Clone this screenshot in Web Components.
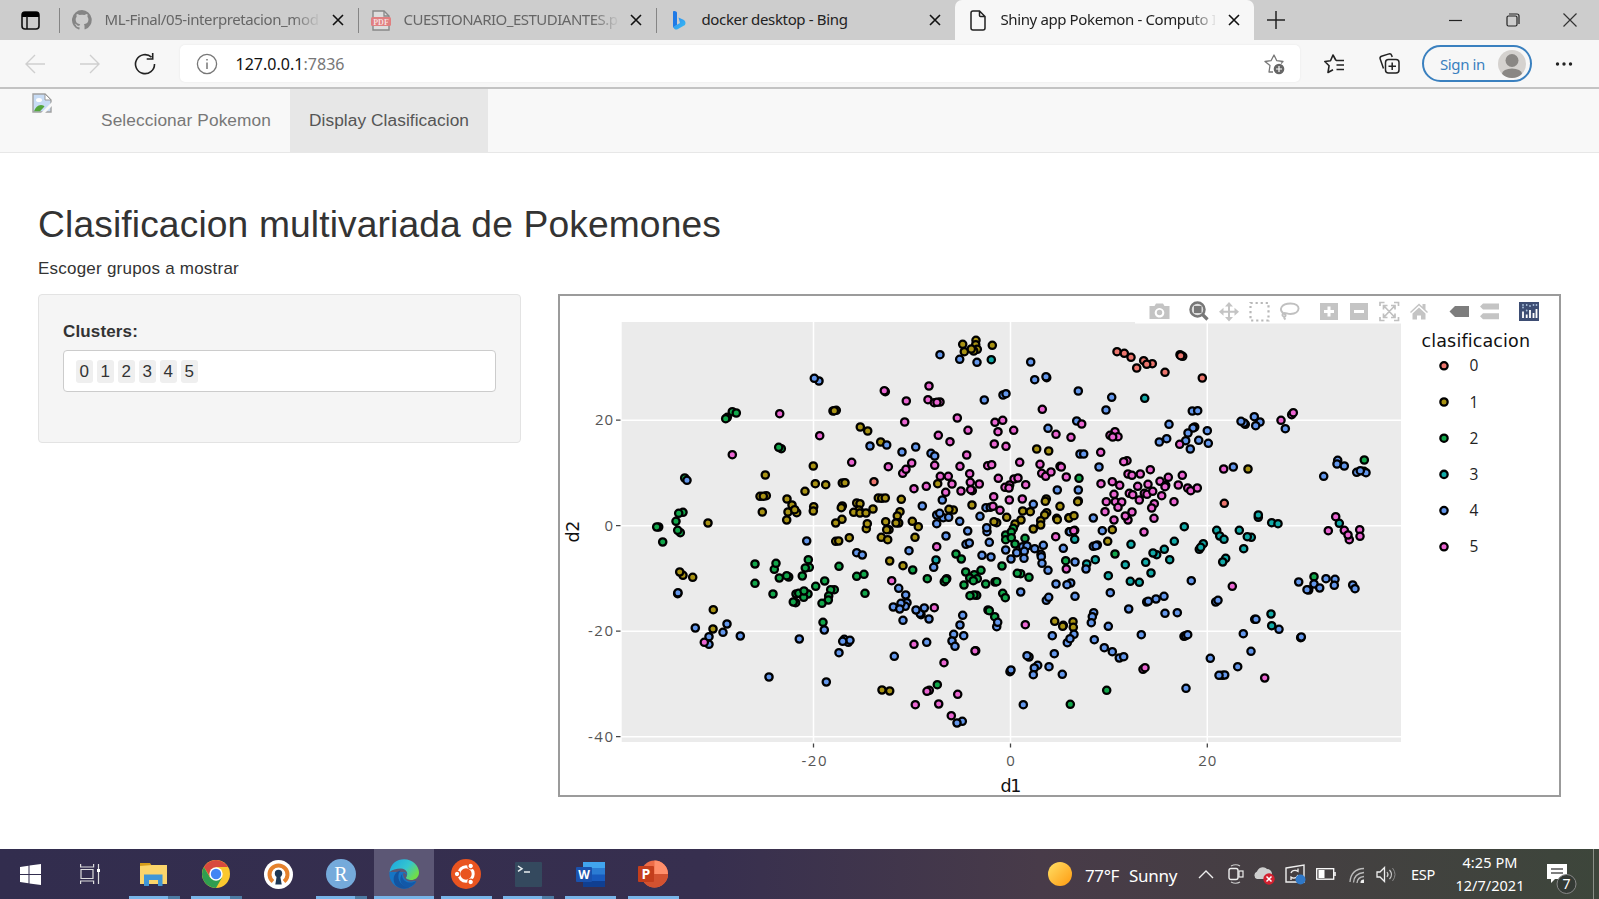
<!DOCTYPE html>
<html lang="es">
<head>
<meta charset="utf-8">
<title>Shiny app Pokemon - Computo</title>
<style>
html,body{margin:0;height:100%;overflow:hidden;background:#fff}
body{font-family:"Liberation Sans",Arial,sans-serif;color:#333}
</style>
</head>
<body>
<desktop-screen></desktop-screen>
<script>
const define = (name, html, after) => {
  const t = document.createElement('template');
  t.innerHTML = html;
  customElements.define(name, class extends HTMLElement {
    connectedCallback() {
      if (this.shadowRoot) return;
      this.attachShadow({mode: 'open'}).append(t.content.cloneNode(true));
      if (after) after(this, this.shadowRoot);
    }
  });
};

/* One line of text spaced to a given advance width */
define('fit-text', `<style>
:host{display:block;white-space:nowrap;flex:none}
span{display:inline-block}
</style><span><slot></slot></span>`, (host, root) => {
  const w = +host.getAttribute('w'), s = root.querySelector('span');
  host.style.width = w + 'px';
  const n = host.textContent.length;
  s.style.letterSpacing = ((w - s.getBoundingClientRect().width) / n) + 'px';
});

define('browser-tab', `<style>
:host{display:flex;align-items:center;height:40px;box-sizing:border-box;flex:none;color:#666;position:relative;padding-left:12px}
:host([sep])::before{content:"";position:absolute;left:0;top:8px;height:25px;width:1px;background:#858585}
:host([active]){background:#f7f7f7;border-radius:7px 7px 0 0;color:#222;padding-left:12px}
:host([dark]){color:#222}
.i{width:22px;height:22px;flex:none;margin-right:11.500px;display:flex;align-items:center;justify-content:center}
.t{flex:none;width:214px;padding-bottom:2px}
:host([fade]) .t{-webkit-mask-image:linear-gradient(90deg,#000 88%,transparent 101%);mask-image:linear-gradient(90deg,#000 88%,transparent 101%)}
.x{margin-left:auto;margin-right:14px;flex:none;display:block}
</style><div class="i"><slot name="icon"></slot></div><div class="t"><slot></slot></div>
<svg class="x" width="12" height="12" viewBox="0 0 12 12"><path d="M1 1l10 10M11 1L1 11" stroke="#111" stroke-width="1.600"/></svg>`);

define('tab-strip', `<style>
:host{display:flex;height:40px;background:#cdcdcd;font:15px "Noto Sans","Open Sans",sans-serif}
svg{display:block;flex:none}
.a{width:59px;display:flex;align-items:center;padding-left:20.500px;box-sizing:border-box}
.p{width:44px;display:flex;align-items:center;justify-content:center}
.w{margin-left:auto;display:flex;align-items:center;padding-right:22px}
</style>
<div class="a"><svg width="19" height="19" viewBox="0 0 19 19"><rect x="1" y="1" width="17" height="17" rx="3" fill="none" stroke="#111" stroke-width="1.600"/><path d="M1 3q0-2 2-2h13q2 0 2 2v3H1z" fill="#000"/><path d="M6 5v13" stroke="#111" stroke-width="1.500"/></svg></div>
<browser-tab sep fade style="width:299px"><svg slot="icon" width="20" height="20" viewBox="0 0 16 16"><path fill="#858585" d="M8 0a8 8 0 0 0-2.53 15.59c.4.07.55-.17.55-.38v-1.5C3.8 14.200 3.330 12.650 3.330 12.650c-.36-.92-.89-1.170-.89-1.170-.72-.5.060-.49.060-.49.8.06 1.230.83 1.230.83.71 1.220 1.870.87 2.330.66.070-.52.28-.87.51-1.070-1.780-.2-3.640-.89-3.640-3.950 0-.87.31-1.590.82-2.150-.08-.2-.36-1.020.08-2.120 0 0 .67-.21 2.200.82a7.600 7.600 0 0 1 4 0c1.530-1.040 2.200-.82 2.200-.82.44 1.100.16 1.920.08 2.120.51.56.82 1.270.82 2.150 0 3.070-1.870 3.750-3.650 3.950.29.25.54.73.54 1.480v2.220c0 .21.15.46.55.38A8 8 0 0 0 8 0z"/></svg><fit-text w="214">ML-Final/05-interpretacion_mod</fit-text></browser-tab>
<browser-tab sep fade style="width:298px"><svg slot="icon" width="20" height="21" viewBox="0 0 20 21"><path d="M2 1h11l5 5v14H2z" fill="#ddd" stroke="#888" stroke-width="1.400"/><path d="M13 1v5h5" fill="none" stroke="#888" stroke-width="1.300"/><rect x="0" y="7" width="20" height="9" rx="1.500" fill="#e07f80"/><text x="10" y="14.500" font-size="8" font-weight="bold" fill="#f6dede" text-anchor="middle" font-family="Liberation Serif,serif">PDF</text></svg><fit-text w="214">CUESTIONARIO_ESTUDIANTES.p</fit-text></browser-tab>
<browser-tab sep dark style="width:299px"><svg slot="icon" width="16" height="20" viewBox="0 0 16 20"><defs><linearGradient id="b" x2="1" y2="1"><stop offset="0" stop-color="#2d8cf0"/><stop offset="1" stop-color="#38bdf2"/></linearGradient></defs><path d="M2 2q0-1.500 1.500-1L5 1.600q1 .4 1 1.400v12L2 17.500z" fill="#1f7ae6"/><path d="M7.500 7.500l5 2.300q3 2 1.500 5.200L7 19q-2 1-3.500 0L2 17l7-4z" fill="url(#b)"/></svg><fit-text w="146">docker desktop - Bing</fit-text></browser-tab>
<browser-tab active fade style="width:299px"><svg slot="icon" width="16" height="21" viewBox="0 0 16 21"><path d="M1 3q0-2 2-2h6.500L15 6.500V18q0 2-2 2H3q-2 0-2-2zM9.500 1v4.500q0 1 1 1H15" fill="none" stroke="#222" stroke-width="1.500"/></svg><fit-text w="216">Shiny app Pokemon - Computo I</fit-text></browser-tab>
<div class="p"><svg width="18" height="18" viewBox="0 0 18 18"><path d="M9 0v18M0 9h18" stroke="#222" stroke-width="1.500"/></svg></div>
<div class="w"><svg style="margin-right:44px" width="13" height="13" viewBox="0 0 13 13"><path d="M0 6.500h13" stroke="#222" stroke-width="1.200"/></svg>
<svg style="margin-right:43px" width="14" height="14" viewBox="0 0 14 14"><rect x="1" y="3" width="10" height="10" rx="1.500" fill="none" stroke="#222" stroke-width="1.200"/><path d="M3 1h8q2 0 2 2v8" fill="none" stroke="#222" stroke-width="1.200"/></svg>
<svg width="14" height="14" viewBox="0 0 14 14"><path d="M.5.5l13 13M13.500.5l-13 13" stroke="#333" stroke-width="1.200"/></svg></div>`);

define('tool-bar', `<style>
:host{display:flex;height:49px;box-sizing:border-box;background:#f7f7f7;border-bottom:2px solid #c3c3c3;align-items:center;font:16px "Noto Sans","Open Sans",sans-serif}
svg{display:block;flex:none}
.addr{display:flex;align-items:center;width:1120px;height:37px;background:#fff;border-radius:5px;margin-left:24px;box-sizing:border-box;padding:0 15px 0 16px;box-shadow:0 0 2px #e4e4e4;flex:none;color:#777}
b{font-weight:normal;color:#111}
.addr fit-text{margin-left:17.500px}
.addr svg:last-child{margin-left:auto}
.pill{display:flex;align-items:center;width:110px;height:37px;box-sizing:border-box;border:2px solid #3a80bf;border-radius:19px;margin-left:22px;padding:0 4px 0 16.500px;color:#3a80bf;font-size:15px;justify-content:space-between}
</style>
<svg style="margin-left:25px" width="20" height="20" viewBox="0 0 20 20"><path d="M20 10H1M10 1L1 10l9 9" fill="none" stroke="#cfcfcf" stroke-width="1.400"/></svg>
<svg style="margin-left:35px" width="20" height="20" viewBox="0 0 20 20"><path d="M0 10h19M10 1l9 9-9 9" fill="none" stroke="#cfcfcf" stroke-width="1.400"/></svg>
<svg style="margin-left:34px" width="22" height="22" viewBox="0 0 22 22"><path d="M20.500 11A9.500 9.500 0 1 1 17.500 4.200M18.700 0v6h-6" fill="none" stroke="#222" stroke-width="1.600"/></svg>
<div class="addr"><svg width="22" height="22" viewBox="0 0 22 22"><circle cx="11" cy="11" r="9.600" fill="none" stroke="#777" stroke-width="1.300"/><path d="M11 9.500v6.500M11 6v1.600" stroke="#777" stroke-width="1.500"/></svg><fit-text w="109"><b>127.0.0.1</b>:7836</fit-text>
<svg width="21" height="22" viewBox="0 0 21 22"><path d="M9 19H5l1-6.500L1 8.500l6-.8L10 2l2.800 5.700 6.200.8-2 2" fill="none" stroke="#777" stroke-width="1.300" stroke-linejoin="round"/><circle cx="15" cy="16" r="5.300" fill="#666"/><path d="M15 13v6M12 16h6" stroke="#fff" stroke-width="1.200"/></svg></div>
<svg style="margin-left:24px" width="21" height="20" viewBox="0 0 21 20"><path d="M12 6.500L9 1 6.500 6.800.8 7.500l4.300 4.200L4 18.500l5-2.800M12 6.500h8M12.500 11H20M12.500 15.500H20" fill="none" stroke="#222" stroke-width="1.600" stroke-linejoin="round"/></svg>
<svg style="margin-left:33.500px" width="21" height="21" viewBox="0 0 21 21"><rect x="6.500" y="6.500" width="13.500" height="13.500" rx="3" fill="none" stroke="#222" stroke-width="1.500"/><path d="M4.500 15.500L1.200 6q-.7-2 1.300-2.700L10 .9q2-.4 2.700 1.600l.5 1.400M13.200 9.500v7.500M9.500 13.200H17" fill="none" stroke="#222" stroke-width="1.500"/></svg>
<div class="pill"><fit-text w="45">Sign in</fit-text><svg width="28" height="28" viewBox="0 0 28 28"><defs><clipPath id="c"><circle cx="14" cy="14" r="14"/></clipPath></defs><circle cx="14" cy="14" r="14" fill="#d5d2cf"/><g clip-path="url(#c)" fill="#8a8784"><circle cx="14" cy="10.500" r="6.500"/><ellipse cx="14" cy="24" rx="10" ry="5.500"/></g></svg></div>
<svg style="margin-left:23px" width="18" height="4" viewBox="0 0 18 4"><g fill="#222"><circle cx="2.500" cy="2" r="1.700"/><circle cx="9" cy="2" r="1.700"/><circle cx="15.500" cy="2" r="1.700"/></g></svg>`);

define('nav-link', `<style>:host{display:flex;align-items:center;height:63px;padding:0 19px;color:#777;font-size:17.300px;line-height:21px}:host([active]){background:#e7e7e7;color:#555}</style><slot></slot>`);

define('nav-bar', `<style>
:host{display:flex;height:64px;box-sizing:border-box;background:#f8f8f8;border-bottom:1px solid #e7e7e7}
svg{margin:4px 30px 0 32px;width:20px;height:20px;display:block}
</style>
<svg viewBox="0 0 20 20"><path d="M1 1h12l6 6v12H1z" fill="#c8dcf5" stroke="#a0a0a0" stroke-width="1.400"/><path d="M13 1v6h6z" fill="#fff" stroke="#999"/><ellipse cx="7" cy="7" rx="3" ry="2" fill="#fff"/><path d="M2 18.300q2-6 7-6.300 3 0 3.500 1.500L8 18.300z" fill="#54a63c"/><path d="M20 9L9 20h4l7-7z" fill="#f8f8f8"/></svg>
<nav-link><fit-text w="170">Seleccionar Pokemon</fit-text></nav-link>
<nav-link active><fit-text w="160">Display Clasificacion</fit-text></nav-link>`);

define('cluster-chip', `<style>:host{display:block;width:17.500px;height:23px;line-height:24px;text-align:center;background:#efefef;border-radius:3px;font-size:17px;color:#333}</style><slot></slot>`);

define('cluster-panel', `<style>
:host{display:block;box-sizing:border-box;width:483px;height:149px;background:#f5f5f5;border:1px solid #e3e3e3;border-radius:4px;padding:25px 24px}
label{display:block;font-weight:bold;font-size:17px;line-height:24px;margin-bottom:6px}
.in{display:flex;align-items:center;gap:3.500px;height:42px;box-sizing:border-box;background:#fff;border:1px solid #ccc;border-radius:4px;padding-left:11.500px}
</style><label><fit-text w="75">Clusters:</fit-text></label><div class="in"></div>`, (h, r) => {
  for (let i = 0; i < 6; i++) { const c = document.createElement('cluster-chip'); c.textContent = i; r.querySelector('.in').append(c); }
});

/* Point lists: tiles with an origin, coordinates in thirds of a pixel, grouped by class */
const tiles = [
 {o:[550,320],
  1:'646,465 630,529 649,527 640,529 637,576 711,537 726,555 714,576 740,578 734,569 710,600 474,609',
  2:'547,275 532,292 527,296 559,279 694,386 686,382 404,474 399,577 386,580 378,604 326,621 320,621 391,638 383,631 338,666',
  4:'411,481', 5:'689,281 547,404'},
 {o:[800,320],
  0:'222,485',
  1:'528,61 488,73 527,74 577,76 493,95 532,88 521,93 514,87 99,273 109,271 103,272 181,321 203,333 242,366 710,387 746,393 40,438 46,491 77,494 15,514 127,489 135,488 413,491 235,534 245,535 256,534 304,538 170,549 180,551 127,558 124,563 177,570 161,577 180,579 198,579 219,567 126,598 107,609 300,575 292,588 257,605 296,609 288,609 337,604 355,620 199,626 202,611 267,629 260,629 244,652 263,659 345,652 107,664 116,663 148,653 41,560 40,573 460,570 447,568 516,555 590,608 582,605 620,592 663,600 645,612 668,573 691,575 739,537 736,544 780,559 740,578 734,585 722,602 722,615 700,627 770,595 772,599 807,593',
  2:'640,625 617,645 634,636 617,659 634,653 645,672 675,655',
  3:'574,119',
  4:'57,183 43,175 420,104 479,118 531,127 692,126 704,179 740,173 738,170 553,240 609,225 618,221 744,325 210,378 260,375 306,396 347,381 393,400 404,408 772,510 367,558 427,540 410,585 430,593 419,580 446,592 410,611 479,604 540,589 558,563 571,562 503,633 561,635 560,623 438,648 568,667 498,673 508,669 700,553 730,676 20,663 668,680 681,678 704,686 790,685 808,635',
  5:'256,215 253,212 319,243 314,306 387,198 384,239 403,248 420,246 411,247 472,294 504,331 415,346 450,365 500,405 585,307 608,301 594,335 641,331 583,372 618,379 727,268 768,343 59,347 155,427 265,440 335,429 308,460 318,448 404,436 480,439 563,437 575,434 659,427 720,433 725,460 737,469 753,456 780,439 784,441 799,471 421,469 445,469 456,492 342,506 379,499 437,517 483,513 509,461 511,487 517,512 512,509 538,492 595,475 642,477 654,474 615,502 629,495 627,504 677,494 581,530 628,540 667,537 579,559 600,571 410,680 767,650'},
 {o:[1060,320],
  0:'171,95 193,100 213,112 251,122 277,131 260,133 230,144 315,157 360,104 368,109 362,107 427,174 493,550',
  1:'564,447 55,543 53,545 27,594 42,587 157,629 143,664',
  2:'57,475 913,420',
  3:'254,235 44,658 213,673 373,620 343,664 470,631 479,648 492,658 538,631 574,652 562,650 551,686 595,592 595,585 635,608 654,611 838,610 430,671 418,688 422,682 313,688',
  4:'55,213 155,232 138,270 50,303 60,402 71,402 117,441 55,510 100,594 127,632 397,273 413,272 327,313 404,321 399,324 384,339 442,332 445,370 416,361 377,362 391,387 320,356 298,366 520,441 556,313 552,309 543,304 600,306 583,290 587,317 676,326 791,469 833,421 831,432 853,438 890,457 912,454 918,458 901,452 100,679 112,675 108,677 30,635',
  5:'44,631 41,632 65,312 33,352 165,335 150,346 174,350 158,351 122,397 201,422 191,425 204,462 216,466 241,462 271,449 123,491 157,485 179,496 233,499 264,493 300,484 317,496 315,500 325,472 367,466 355,495 383,504 392,512 412,504 162,523 208,520 218,524 253,520 261,523 278,514 238,540 305,527 342,545 139,545 166,545 185,546 174,562 135,575 216,576 204,600 196,588 162,600 283,551 275,564 282,595 252,636 359,373 491,447 695,284 700,278 663,301 827,590 805,632 853,631 868,659 864,645 899,629 900,649'},
 {o:[550,540],
  1:'399,106 389,96 428,112 490,209 489,267',
  2:'615,72 615,130 673,88 678,70 688,114 716,111 710,107 775,59 778,82 766,84 757,108 669,162 797,139 738,162 746,160 774,162 761,172 762,153 737,188 730,186',
  4:'383,161 384,158 436,264 531,252 519,277 477,290 477,313 571,288 748,297 657,411', 5:'463,307'},
 {o:[820,540],
  1:'209,63 249,77 186,450 209,453 704,244 759,245 730,256 728,259 760,262',
  2:'14,123 43,149 32,149 26,168 25,180 6,190 9,247 57,79 110,109 132,103 135,160 278,90 322,116 373,125 380,116 378,119 408,42 424,57 437,96 463,104 483,91 449,114 472,116 460,122 432,135 497,132 525,126 530,125 470,166 462,165 450,167 546,78 548,160 556,173 602,101 592,100 627,112 504,210 508,212 524,230 352,434 737,62 751,493',
  3:'348,60',
  4:'110,38 127,45 267,32 341,82 486,46 513,51 573,57 557,30 590,38 613,34 612,55 663,43 664,50 666,70 684,91 708,132 752,129 741,134 765,66 765,169 602,156 679,181 686,172 236,145 257,165 261,188 256,199 243,190 220,201 239,207 249,241 303,224 300,220 313,204 288,210 327,237 428,226 420,255 401,283 431,287 396,303 405,319 530,260 533,247 13,270 73,298 85,307 90,301 68,304 57,338 19,426 223,349 320,307 570,395 573,390 627,351 621,347 653,376 643,384 640,404 687,380 727,403 703,341 697,287 762,283 742,308 750,296 610,494 427,544 411,549',
  5:'215,122 343,203 282,313 372,368 467,332 465,333 616,254 739,87 328,451 321,454 413,463 356,492 286,494 394,527'},
 {o:[1080,540],
  2:'105,42 702,110 80,451',
  3:'20,72 46,59 85,107 136,74 151,124 178,127 197,67 213,99 269,59 230,44 219,39 437,55 428,66 573,222 575,257',
  4:'18,87 91,158 146,207 41,218 37,230 34,248 85,259 43,299 73,323 97,335 118,354 131,350 184,284 200,186 205,184 228,177 252,169 334,122 255,220 292,218 407,186 414,181 312,289 317,287 323,284 391,355 427,406 434,405 417,406 473,380 513,334 490,281 524,238 528,238 597,268 662,293 664,291 656,126 738,116 765,118 763,136 702,132 719,144 686,150 681,149 818,135 825,146 318,445',
  5:'457,139 189,388 195,383 554,414'}
];
const colors = ['#ec756d','#a89213','#11a64a','#12aaa8','#6397ec','#ea65d2'];

define('scatter-plot', `<style>
:host{display:block;width:1003px;height:503px;box-sizing:border-box;border:2px solid #9b9b9b;background:#fff}
svg{display:block}
.tick{font:15px "Open Sans","Noto Sans",sans-serif;fill:#555}
.ax{font:17.500px "DejaVu Sans",sans-serif;fill:#111}
.lg{font:15.500px "Open Sans","Noto Sans",sans-serif;fill:#222}
</style>
<svg width="999" height="499" viewBox="560 296 999 499">
<rect x="621.700" y="322" width="779.300" height="420" fill="#ebebeb"/>
<rect x="1135" y="297" width="410" height="26.500" fill="#fff"/>
<g stroke="#fff" stroke-width="1.500"><path d="M621.700 420.200H1401M621.700 525.700H1401M621.700 631.200H1401M621.700 736.700H1401M813.500 322V742M1010.500 322V742M1207.300 322V742"/></g>
<g stroke="#444" stroke-width="1.300"><path d="M616 420.200h4.500M616 525.700h4.500M616 631.200h4.500M616 736.700h4.500M813.500 743.500v4M1010.500 743.500v4M1207.300 743.500v4"/></g>
<g class="tick" text-anchor="end"><text x="613" y="425.400" textLength="18">20</text><text x="613" y="531">0</text><text x="613" y="636.400" textLength="25">-20</text><text x="613" y="742" textLength="25">-40</text></g>
<g class="tick" text-anchor="middle"><text x="814" y="766" textLength="25">-20</text><text x="1010.500" y="766">0</text><text x="1207.300" y="766" textLength="18">20</text></g>
<g class="ax"><text x="1011" y="791.500" text-anchor="middle" textLength="21">d1</text><text transform="translate(579 531.500) rotate(-90)" text-anchor="middle" textLength="22">d2</text><text x="1421.500" y="347" textLength="108.500">clasificacion</text></g>
<g id="pts" stroke="#000" stroke-width="2.300"></g>
<g id="leg" stroke="#000" stroke-width="2.300"></g><g id="ln" class="lg"></g>
<g fill="#c4c4c4">
<path d="M1149.500 306h5l1.500-2.500h7l1.500 2.500h5v13h-20zM1159.500 308a4.800 4.800 0 1 0 .01 0z" fill-rule="evenodd"/><circle cx="1159.500" cy="312.500" r="2.700"/>
<path d="M1229 302l4 4.500h-3v4.200h4.500v-3l4.500 4-4.500 4v-3H1230v4.300h3l-4 4.500-4-4.500h3v-4.300h-4.500v3l-4.500-4 4.500-4v3h4.500v-4.200h-3z"/>
<rect x="1320" y="303" width="18" height="17"/><rect x="1350" y="303" width="18" height="17"/>
<path d="M1410 312l9-8.500 3.500 3.300V304h3v5.500l2.500 2.500-1 1-8-7.400-8 7.400zM1412.500 313.500l6.500-6 6.500 6v6h-4.500v-4h-4v4h-4.500z"/>
<path d="M1480 306.500l3-3h16v6h-16zM1480 316.300l3-3h16v6h-16z"/>
</g>
<path d="M1329 306.500v10M1324 311.500h10M1354 311.500h10" stroke="#fff" stroke-width="3"/>
<rect x="1250.500" y="303" width="18" height="17.500" fill="none" stroke="#b8b8b8" stroke-width="2.200" stroke-dasharray="2.200 2.870"/>
<path d="M1285 314.500c-8-5-3-11 5.500-11 11 0 10.500 10 0 10.500-3 0-4-1-6-1s-3 2.500-1 3.500 3-2 1-2.500m-.5 2.500q0 2 1.500 3" fill="none" stroke="#c0c0c0" stroke-width="1.900"/>
<path d="M1380 306v-3.500h4.500M1394 302.500h4.500v3.500M1398.500 317v3.500h-4.500M1384.500 320.500h-4.500V317M1384 306l10.500 11M1394.500 306L1384 317M1383.500 309.500v-4h4M1391 305.500h4v4M1395 313.500v4h-4M1387.500 317.500h-4v-4" fill="none" stroke="#c0c0c0" stroke-width="1.700"/>
<circle cx="1197.500" cy="309.500" r="7" fill="#ddd" stroke="#777" stroke-width="2.500"/><rect x="1194" y="306" width="7.500" height="7" fill="#777"/><path d="M1202.500 314.500l5 5" stroke="#777" stroke-width="3.200"/>
<path d="M1449.500 311.500l5.500-5.500h14v11h-14z" fill="#7d7d7d"/>
<rect x="1519" y="302" width="20" height="19" fill="#3d4d73"/><path d="M1523 311.500v6.500M1526.700 314.500v3.500M1530 310v8M1533.500 313v5M1536.500 309v9" stroke="#fff" stroke-width="1.800"/><g fill="#aac1dc"><circle cx="1523" cy="307.500" r=".9"/><circle cx="1523" cy="305" r=".9"/><circle cx="1526.700" cy="305" r=".9"/><circle cx="1526.700" cy="310.500" r=".9"/><circle cx="1530" cy="306" r=".9"/><circle cx="1533.500" cy="305" r=".9"/><circle cx="1536.500" cy="305" r=".9"/></g>
</svg>`, (h, r) => {
  const dot = (x, y, k) => `<circle cx="${x.toFixed(1)}" cy="${y.toFixed(1)}" r="3.650" fill="${colors[k]}"/>`;
  let out = '', leg = '', ln = '';
  for (let k = 0; k < 6; k++) {
    for (const t of tiles) if (t[k]) for (const p of t[k].split(' ')) {
      const [x, y] = p.split(',');
      out += dot(t.o[0] + x / 3, t.o[1] + y / 3, k);
    }
    leg += dot(1444, 365.8 + 36.2 * k, k);
    ln += `<text x="1469.500" y="${371.4 + 36.2 * k}">${k}</text>`;
  }
  r.getElementById('pts').innerHTML = out;
  r.getElementById('leg').innerHTML = leg;
  r.getElementById('ln').innerHTML = ln;
});

define('shiny-page', `<style>
:host{display:block;flex:1;background:#fff;padding:48.500px 38px 0 38px;box-sizing:border-box}
h1{font-weight:normal;font-size:37.200px;line-height:44px;margin:0}
p{margin:11.500px 0 14px;font-size:17px;line-height:23px}
.row{display:flex;gap:37px}
</style><h1><fit-text w="683">Clasificacion multivariada de Pokemones</fit-text></h1><p><fit-text w="201">Escoger grupos a mostrar</fit-text></p>
<div class="row"><cluster-panel></cluster-panel><scatter-plot></scatter-plot></div>`);

define('task-item', `<style>
:host{display:flex;width:62.400px;height:50px;align-items:center;justify-content:center;position:relative;flex:none}
:host([active]){background:#5c5775;width:60px;margin:0 .7px 0 1.700px}
i{display:none;position:absolute;bottom:0;left:6px;width:51px;height:3px;background:#78b4e8}
:host([run]) i{display:block}
:host([multi]) i{background:linear-gradient(90deg,#78b4e8 39px,#4d7ba3 39px)}
:host([active]) i{left:0;width:60px}
</style><slot></slot><i></i>`);

define('task-bar', `<style>
:host{display:flex;height:50px;background:linear-gradient(90deg,#322d4e 0,#372f4f 44%,#483b49 65%,#453f42 80%,#3d463b 100%);color:#fff;font:15px "Noto Sans","Open Sans",sans-serif;align-items:center}
svg{display:block;flex:none}
.g{margin-right:2.700px}
.clock{width:70px;margin-left:20px;display:flex;flex-direction:column;align-items:center;line-height:23px;font-size:14.500px;padding-bottom:1px}
</style>
<task-item style="width:60px"><svg width="21" height="21" viewBox="0 0 21 21"><path d="M0 3l8.500-1.200V10H0zM9.500 1.600L21 0v10H9.500zM0 11h8.500v8.200L0 18zM9.500 11H21v10L9.500 19.400z" fill="#fff"/></svg></task-item>
<task-item class="g" style="width:60px"><svg width="20" height="20" viewBox="0 0 20 20"><path d="M.6 0v3h13V0M.6 20v-3h13v3M1 5.500h12v9H1zM18.500 0v20" fill="none" stroke="#ddd" stroke-width="1.200"/><rect x="17" y="5" width="3" height="3" fill="#fff"/></svg></task-item>
<task-item run multi><svg width="27" height="24" viewBox="0 0 27 24"><path d="M0 1h10l2 3H0z" fill="#d59c1a"/><path d="M0 4l12-1h15v19H0z" fill="#fbd56b"/><path d="M4 12.500h18.500V24H18v-6H9v6H4z" fill="#4096d6"/></svg></task-item>
<task-item run multi><svg width="28" height="28" viewBox="-14 -14 28 28"><circle r="14" fill="#fbc82f"/><path d="M-12.120-7A14 14 0 0 1 12.120-7H0L-5.500 3.500z" fill="#d84a3e"/><path d="M-12.120-7A14 14 0 0 0 0 14L6 3.500-6 3.500z" fill="#2f9e50"/><circle r="6.700" fill="#fff"/><circle r="5.200" fill="#4285f4"/></svg></task-item>
<task-item><svg width="29" height="29" viewBox="-14.500 -14.500 29 29"><circle r="14.500" fill="#fff"/><path d="M-5.500 7A9 9 0 1 1 5.500 7" fill="none" stroke="#e5812c" stroke-width="4"/><circle cy="-1" r="3.700" fill="#1f3855"/><path d="M-1.500 0h3l1.700 10h-6.400z" fill="#1f3855"/></svg></task-item>
<task-item run multi><svg width="30" height="30" viewBox="-15 -15 30 30"><circle r="15" fill="#75aadb"/><text y="6.500" text-anchor="middle" font-size="20" fill="#fff" font-family="Liberation Serif,serif">R</text></svg></task-item>
<task-item run active><svg width="30" height="30" viewBox="0 0 30 30"><defs><linearGradient id="e" x2="1" y2=".6"><stop offset="0" stop-color="#1ba4e0"/><stop offset=".6" stop-color="#35c6cf"/><stop offset="1" stop-color="#70dd49"/></linearGradient></defs><path d="M.5 13A14.700 14.700 0 0 0 15 29.700c5 0 9.500-2.500 12-6.700L16 13z" fill="#1675c4"/><path d="M.5 13C2 4 8 .3 15 .3 24 .3 30 7 30 13.500c0 5-4 7.500-8 7.500-3 0-5.500-1-5-3 3-3 .5-8.500-5-8.500C7 9.500 3 11 .5 13z" fill="url(#e)"/><path d="M9.500 16c-1 6 4 12 11 12.500-3 1.500-9 2-13-1.500C2 22 5 12 12 11.500c-1.500 1-2.300 2.500-2.500 4.500z" fill="#1454a0"/><path d="M13.500 14.500c-1.500 4 1.500 8.500 7 9 3 .2 5-.5 7-1.500-3 5-7 6.500-9.500 6.500-6-1.500-9-8.500-4.500-14z" fill="#1258a8"/><path d="M14.500 13.500c-1.500 4 2 8.500 6.500 9 3 0 5.500-.5 7.500-2.500-3 1.500-9 1.500-11.500-.5-.5-1 1.500-2 .5-4z" fill="#5c5775"/></svg></task-item>
<task-item run><svg width="30" height="30" viewBox="-15 -15 30 30"><circle r="15" fill="#e95420"/><circle r="7.200" fill="none" stroke="#fff" stroke-width="3"/><g fill="#fff" stroke="#e95420" stroke-width="1.300"><circle cx="-9" r="2.800"/><circle cx="4.700" cy="-8" r="2.800"/><circle cx="4.700" cy="8" r="2.800"/></g></svg></task-item>
<task-item run multi><svg width="27" height="25" viewBox="0 0 27 25"><rect width="27" height="25" rx="1" fill="#34495e"/><path d="M3 4l4 2.700-4 2.700M9 10h6" stroke="#e8eef0" stroke-width="1.500" fill="none"/></svg></task-item>
<task-item run><svg width="30" height="27" viewBox="0 0 30 27"><path d="M7 1h22v7H7z" fill="#41a5ee"/><path d="M7 7h22v7H7z" fill="#2b7cd3"/><path d="M7 13.500h22V20H7z" fill="#185abd"/><path d="M7 20h22v6H7z" fill="#103f91"/><rect y="6" width="16" height="15" rx="1" fill="#1a52ad"/><text x="8" y="18" font-size="12" font-weight="bold" text-anchor="middle" fill="#fff" font-family="Open Sans,sans-serif">W</text></svg></task-item>
<task-item run><svg width="30" height="28" viewBox="0 0 30 28"><circle cx="16.500" cy="14" r="13.500" fill="#ed6c47"/><path d="M16.500.5A13.500 13.500 0 0 1 30 14H16.500z" fill="#ff8f6b"/><path d="M30 14a13.500 13.500 0 0 1-27 0z" fill="#d35230"/><rect y="6" width="16" height="16" rx="1" fill="#c43e1c"/><text x="8" y="19" font-size="14" font-weight="bold" text-anchor="middle" fill="#fff" font-family="Open Sans,sans-serif">P</text></svg></task-item>
<svg style="margin-left:auto" width="24" height="24" viewBox="0 0 24 24"><defs><linearGradient id="s" x2="1" y2="1"><stop offset="0" stop-color="#ffe066"/><stop offset="1" stop-color="#ff9a10"/></linearGradient></defs><circle cx="12" cy="12" r="12" fill="url(#s)"/></svg>
<fit-text style="margin-left:13px;font-size:17px;padding-top:3px" w="34">77°F</fit-text><fit-text style="margin-left:10px;font-size:17px;padding-top:3px" w="48">Sunny</fit-text>
<svg style="margin-left:21px" width="16" height="9" viewBox="0 0 16 9"><path d="M1 8l7-7 7 7" fill="none" stroke="#eee" stroke-width="1.400"/></svg>
<svg style="margin-left:14px" width="16" height="20" viewBox="0 0 16 20"><path d="M3 2q5-2.500 9 0M3 18q5 2.500 9 0" fill="none" stroke="#ccc" stroke-width="1.200"/><rect x="1" y="4.500" width="9" height="11" rx="2" fill="none" stroke="#eee" stroke-width="1.400"/><rect x="11" y="7" width="4" height="6" fill="none" stroke="#eee" stroke-width="1.200"/></svg>
<svg style="margin-left:10px;margin-top:3px" width="21" height="19" viewBox="0 0 21 19"><path d="M3 13a4 4 0 0 1 0-7.500A6 6 0 0 1 13 3a5 5 0 0 1 5 5l-3 5z" fill="#cfcfcf"/><circle cx="15" cy="13" r="5.700" fill="#d3202f"/><path d="M12.500 10.500l5 5M17.500 10.500l-5 5" stroke="#fff" stroke-width="1.500"/></svg>
<svg style="margin-left:10px" width="21" height="21" viewBox="0 0 21 21"><path d="M1 4l18-3v17H1z" fill="none" stroke="#eee" stroke-width="1.400"/><path d="M6 9q1-3 5-2.500l2 1V4.500M13 11q-1 3.500-5 3l-2-1v3" fill="none" stroke="#eee" stroke-width="1.300"/><circle cx="15.500" cy="15.500" r="5" fill="#2f78c8"/></svg>
<svg style="margin-left:10px" width="20" height="12" viewBox="0 0 20 12"><rect x=".7" y=".7" width="17" height="10.500" fill="none" stroke="#fff" stroke-width="1.300"/><rect x="2.500" y="2" width="6" height="8" fill="#fff"/><path d="M19 4v4" stroke="#fff" stroke-width="1.500"/></svg>
<svg style="margin-left:13px;margin-top:3px" width="16" height="17" viewBox="0 0 16 17"><g fill="none" stroke="#bbb" stroke-width="1.300"><path d="M1 15Q2 2 15 1.500M4.500 15.500Q5 6.500 15 5.500M8 16q.5-6 7-6.500"/></g><path d="M11.500 16a3 3 0 0 1 3.500-3.500V16z" fill="#eee"/></svg>
<svg style="margin-left:11px" width="20" height="17" viewBox="0 0 20 17"><path d="M1 6h3l4.500-4.500v14L4 11H1z" fill="none" stroke="#eee" stroke-width="1.300"/><path d="M11 6q2 2.500 0 5M13.500 4q4 4.500 0 9" fill="none" stroke="#ccc" stroke-width="1.200"/><path d="M16.500 2q5 6.500 0 13" fill="none" stroke="#888"/></svg>
<fit-text style="margin-left:15px;font-size:14.500px" w="24">ESP</fit-text>
<div class="clock"><fit-text w="55">4:25 PM</fit-text><fit-text w="69">12/7/2021</fit-text></div>
<svg style="margin:0 5px 0 22px" width="41" height="50" viewBox="1547 849 41 50"><path d="M1547 864h20v15h-12l-4 4v-4h-4z" fill="#fff"/><path d="M1551 869h12M1551 873h12" stroke="#555" stroke-width="1.300"/><circle cx="1566.500" cy="884" r="9.500" fill="#343a35" stroke="#888" stroke-width="1"/><text x="1566.500" y="889" font-size="14" text-anchor="middle" fill="#fff">7</text></svg>
<svg width="6" height="50" viewBox="0 0 6 50"><path d="M.5 0v50" stroke="#8a8f87"/></svg>`);

define('desktop-screen', `<style>:host{display:flex;flex-direction:column;width:1599px;height:899px;overflow:hidden}</style>
<tab-strip></tab-strip><tool-bar></tool-bar><nav-bar></nav-bar><shiny-page></shiny-page><task-bar></task-bar>`);
</script>
</body>
</html>
